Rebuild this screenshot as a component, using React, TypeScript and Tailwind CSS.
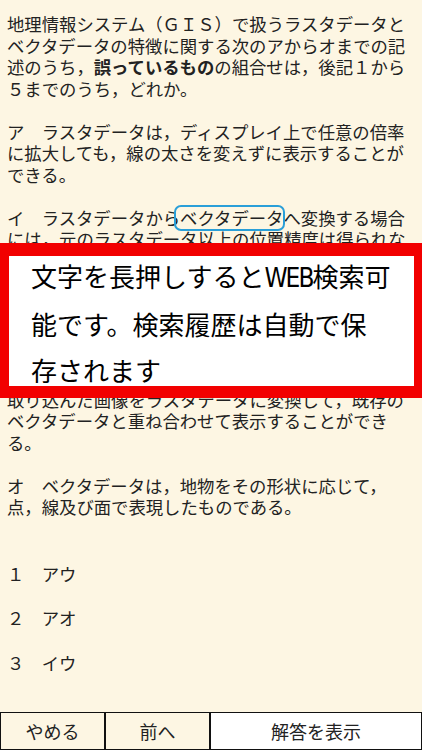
import type { ReactNode } from 'react';

const BODY_FONT = "font-['Noto_Sans_CJK_JP','Noto_Sans',sans-serif]";

function Marked({ children }: { children: ReactNode }) {
  // blue rounded frame laid over the word the user long-pressed
  return (
    <span className="relative inline-block">
      {children}
      <span className="pointer-events-none absolute -left-[6px] -right-[2px] -top-[2px] -bottom-[3px] rounded-[7px] border-[2.5px] border-[#2a9fd8]" />
    </span>
  );
}

const lines: (ReactNode | null)[] = [
  '地理情報システム（ＧＩＳ）で扱うラスタデータと',
  'ベクタデータの特徴に関する次のアからオまでの記',
  <>
    述のうち，<b className="font-bold">誤っているもの</b>の組合せは，後記１から
  </>,
  '５までのうち，どれか。',
  null,
  'ア　ラスタデータは，ディスプレイ上で任意の倍率',
  'に拡大しても，線の太さを変えずに表示することが',
  'できる。',
  null,
  <>
    イ　ラスタデータから<Marked>ベクタデータ</Marked>へ変換する場合
  </>,
  'には，元のラスタデータ以上の位置精度は得られな',
  'い。',
  null,
  'ウ　ネットワーク解析には，一般にラスタデータより',
  'もベクタデータの方が適している。',
  null,
];

const lowerLines: (ReactNode | null)[] = [
  'エ　紙地図をスキャナで読み取り，コンピュータに',
  '取り込んだ画像をラスタデータに変換して，既存の',
  'ベクタデータと重ね合わせて表示することができ',
  'る。',
  null,
  'オ　ベクタデータは，地物をその形状に応じて，',
  '点，線及び面で表現したものである。',
];

const choices = [
  { no: '１', text: 'アウ' },
  { no: '２', text: 'アオ' },
  { no: '３', text: 'イウ' },
];

function TextLines({ items }: { items: (ReactNode | null)[] }) {
  return (
    <>
      {items.map((line, i) =>
        line === null ? (
          <div key={i} className="h-[21.5px]" />
        ) : (
          <div key={i} className="whitespace-nowrap">
            {line}
          </div>
        ),
      )}
    </>
  );
}

export default function App() {
  return (
    <div
      className={`relative flex h-[750px] w-[422px] flex-col overflow-hidden bg-[#fdf6e3] text-[#222] ${BODY_FONT}`}
    >
      <div className="flex-1 px-[7px] pt-[13px] text-[17.35px] leading-[21.5px]">
        <TextLines items={lines} />
        <div className="mt-[10px]">
          <TextLines items={lowerLines} />
        </div>

        <div className="mt-[45px] flex flex-col gap-[23px]">
          {choices.map((c) => (
            <div key={c.no} className="whitespace-nowrap">
              {c.no}　{c.text}
            </div>
          ))}
        </div>
      </div>

      <div className="flex h-[38px] text-[18px] text-[#222]">
        <button className="flex w-[105px] items-center justify-center border-[1.5px] border-[#111] bg-[#fdf6e3]">
          やめる
        </button>
        <button className="flex w-[105px] items-center justify-center border-[1.5px] border-[#111] bg-[#fdf6e3]">
          前へ
        </button>
        <button className="flex flex-1 items-center justify-center border-[1.5px] border-[#111] bg-white">
          解答を表示
        </button>
      </div>

      {/* search hint banner over the question text */}
      <div className="absolute left-0 top-[243px] h-[155px] w-[422px] overflow-hidden border-l-[9px] border-r-[8px] border-t-[13px] border-b-[12px] border-[#f20000] bg-white">
        <div className="-mt-[3px] pl-[22px] text-[26px] leading-[46px] text-black">
          <div className="whitespace-nowrap">
            文字を長押しすると
            <span className="font-['Liberation_Sans_Narrow','DejaVu_Sans_Condensed',sans-serif] tracking-[-2px]">
              WEB
            </span>
            検索可
          </div>
          <div className="whitespace-nowrap">能です。検索履歴は自動で保</div>
          <div className="whitespace-nowrap">存されます</div>
        </div>
      </div>
    </div>
  );
}
